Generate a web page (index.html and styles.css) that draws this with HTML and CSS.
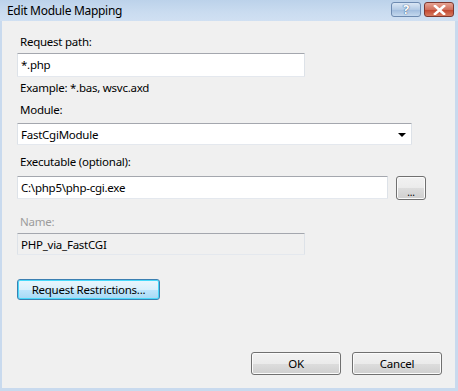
FILE: index.html
```html
<!DOCTYPE html>
<html lang="en">
<head>
  <meta charset="UTF-8">
  <title>Edit Module Mapping</title>
  <link rel="stylesheet" href="styles.css">
</head>
<body>

  <div class="window">
    <div class="titleBar">
      <span class="titleText">Edit Module Mapping</span>
      <div class="captionButtons">
        <div class="captionBtn helpBtn">?</div>
        <div class="captionBtn closeBtn">
          <svg width="13" height="10" viewBox="0 0 13 10">
            <path d="M2 1 L11 9 M11 1 L2 9" stroke="#fff" stroke-width="2.6" stroke-linecap="square" fill="none"/>
          </svg>
        </div>
      </div>
    </div>

    <div class="content">
      <label class="fieldLabel pathLabel">Request path:</label>
      <div class="textBox short pathBox">*.php</div>
      <div class="hint">Example: *.bas, wsvc.axd</div>

      <label class="fieldLabel moduleLabel">Module:</label>
      <div class="textBox select">
        <span>FastCgiModule</span>
        <span class="dropArrow"></span>
      </div>

      <label class="fieldLabel exeLabel">Executable (optional):</label>
      <div class="browseRow">
        <div class="textBox exe">C:\php5\php-cgi.exe</div>
        <button class="btn browseBtn">...</button>
      </div>

      <label class="fieldLabel disabled nameLabel">Name:</label>
      <div class="textBox short readOnly">PHP_via_FastCGI</div>

      <button class="btn restrictBtn">Request Restrictions...</button>

      <div class="dialogButtons">
        <button class="btn okBtn">OK</button>
        <button class="btn cancelBtn">Cancel</button>
      </div>
    </div>
  </div>

</body>
</html>
```

FILE: styles.css
```css
body {
  margin: 0;
  font-family: "Noto Sans", "Open Sans", sans-serif;
  font-size: 11.5px;
  letter-spacing: -0.25px;
  color: #000;
  background-color: #f0f0f0;
}

.window {
  width: 458px;
  height: 391px;
  box-sizing: border-box;
  display: flex;
  flex-direction: column;
  background-color: #c9daee;
  padding: 0 3px 3px 2px;
}

.titleBar {
  height: 21px;
  display: flex;
  align-items: flex-start;
  justify-content: space-between;
  margin: 0 -3px 0 -2px;
  background: linear-gradient(to bottom, #bcd2ea, #cadcf0 60%, #d0e0f2);
}

.titleText {
  font-size: 12px;
  letter-spacing: -0.3px;
  padding-left: 7px;
  line-height: 21px;
}

.captionButtons {
  display: flex;
  gap: 3px;
  padding: 2px 4px 0 0;
}

.captionBtn {
  width: 30px;
  height: 15px;
  box-sizing: border-box;
  border-radius: 3px;
  display: flex;
  align-items: center;
  justify-content: center;
}

.helpBtn {
  border: 1px solid #6d8ab0;
  background: linear-gradient(to bottom, #d9e6f4, #b4cbe5 50%, #9fbbdd 51%, #c4d8ee);
  color: #fff;
  font-weight: bold;
  font-size: 13px;
  line-height: 13px;
  text-shadow: 0 0 1px #35557d, 0 0 1px #35557d;
}

.closeBtn {
  border: 1px solid #7c3830;
  background: linear-gradient(to bottom, #e7a494, #d0705d 50%, #c0432c 51%, #d77a5f);
}

.content {
  flex: 1;
  display: flex;
  flex-direction: column;
  align-items: flex-start;
  background-color: #f0f0f0;
  padding: 0 0 0 15px;
}

.fieldLabel {
  line-height: 16px;
  padding-left: 3px;
}

.pathLabel {
  margin-top: 13px;
}

.moduleLabel {
  margin-top: 6px;
}

.exeLabel {
  margin-top: 9px;
}

.nameLabel {
  margin-top: 14px;
  color: #9c9c9c;
}

.textBox {
  height: 23px;
  box-sizing: border-box;
  border: 1px solid #b5b8bf;
  border-top-color: #a4a7ae;
  border-left-color: #dde2e8;
  border-right-color: #dde2e8;
  border-bottom-color: #e4e8ee;
  background-color: #fff;
  padding: 0 3px;
  line-height: 21px;
  border-radius: 1px;
}

.short {
  width: 288px;
}

.pathBox {
  height: 24px;
  line-height: 22px;
  margin-top: 3px;
}

.hint {
  line-height: 16px;
  padding-left: 3px;
  margin-top: 3px;
}

.select {
  width: 395px;
  height: 22px;
  display: flex;
  justify-content: space-between;
  align-items: center;
  margin-top: 5px;
}

.dropArrow {
  width: 0;
  height: 0;
  border-left: 4px solid transparent;
  border-right: 4px solid transparent;
  border-top: 4px solid #000;
  margin-right: 2px;
  margin-top: 1px;
}

.browseRow {
  display: flex;
  gap: 8px;
  align-items: flex-start;
  margin-top: 6px;
}

.exe {
  width: 371px;
}

.readOnly {
  background-color: #f0f0f0;
  height: 22px;
  margin-top: 3px;
}

.btn {
  font-family: inherit;
  font-size: 11.5px;
  letter-spacing: -0.25px;
  color: #000;
  box-sizing: border-box;
  border: 1px solid #707070;
  border-radius: 3px;
  background: linear-gradient(to bottom, #f2f2f2, #ebebeb 50%, #dddddd 51%, #cfcfcf);
  box-shadow: inset 0 0 0 1px #fbfbfb;
  padding: 0;
}

.browseBtn {
  width: 30px;
  height: 24px;
  font-size: 10px;
  line-height: 24px;
  padding-top: 3px;
}

.restrictBtn {
  width: 143px;
  height: 21px;
  margin-top: 24px;
  border-color: #3c7fb1;
  box-shadow: inset 0 0 0 1px #48d9fa;
  background: linear-gradient(to bottom, #eaf6fd, #d9f0fc 50%, #bee6fd 51%, #a7d9f5);
}

.dialogButtons {
  display: flex;
  gap: 11px;
  margin-top: 52px;
  align-self: flex-end;
  margin-right: 13px;
}

.okBtn, .cancelBtn {
  width: 90px;
  height: 23px;
}
```
